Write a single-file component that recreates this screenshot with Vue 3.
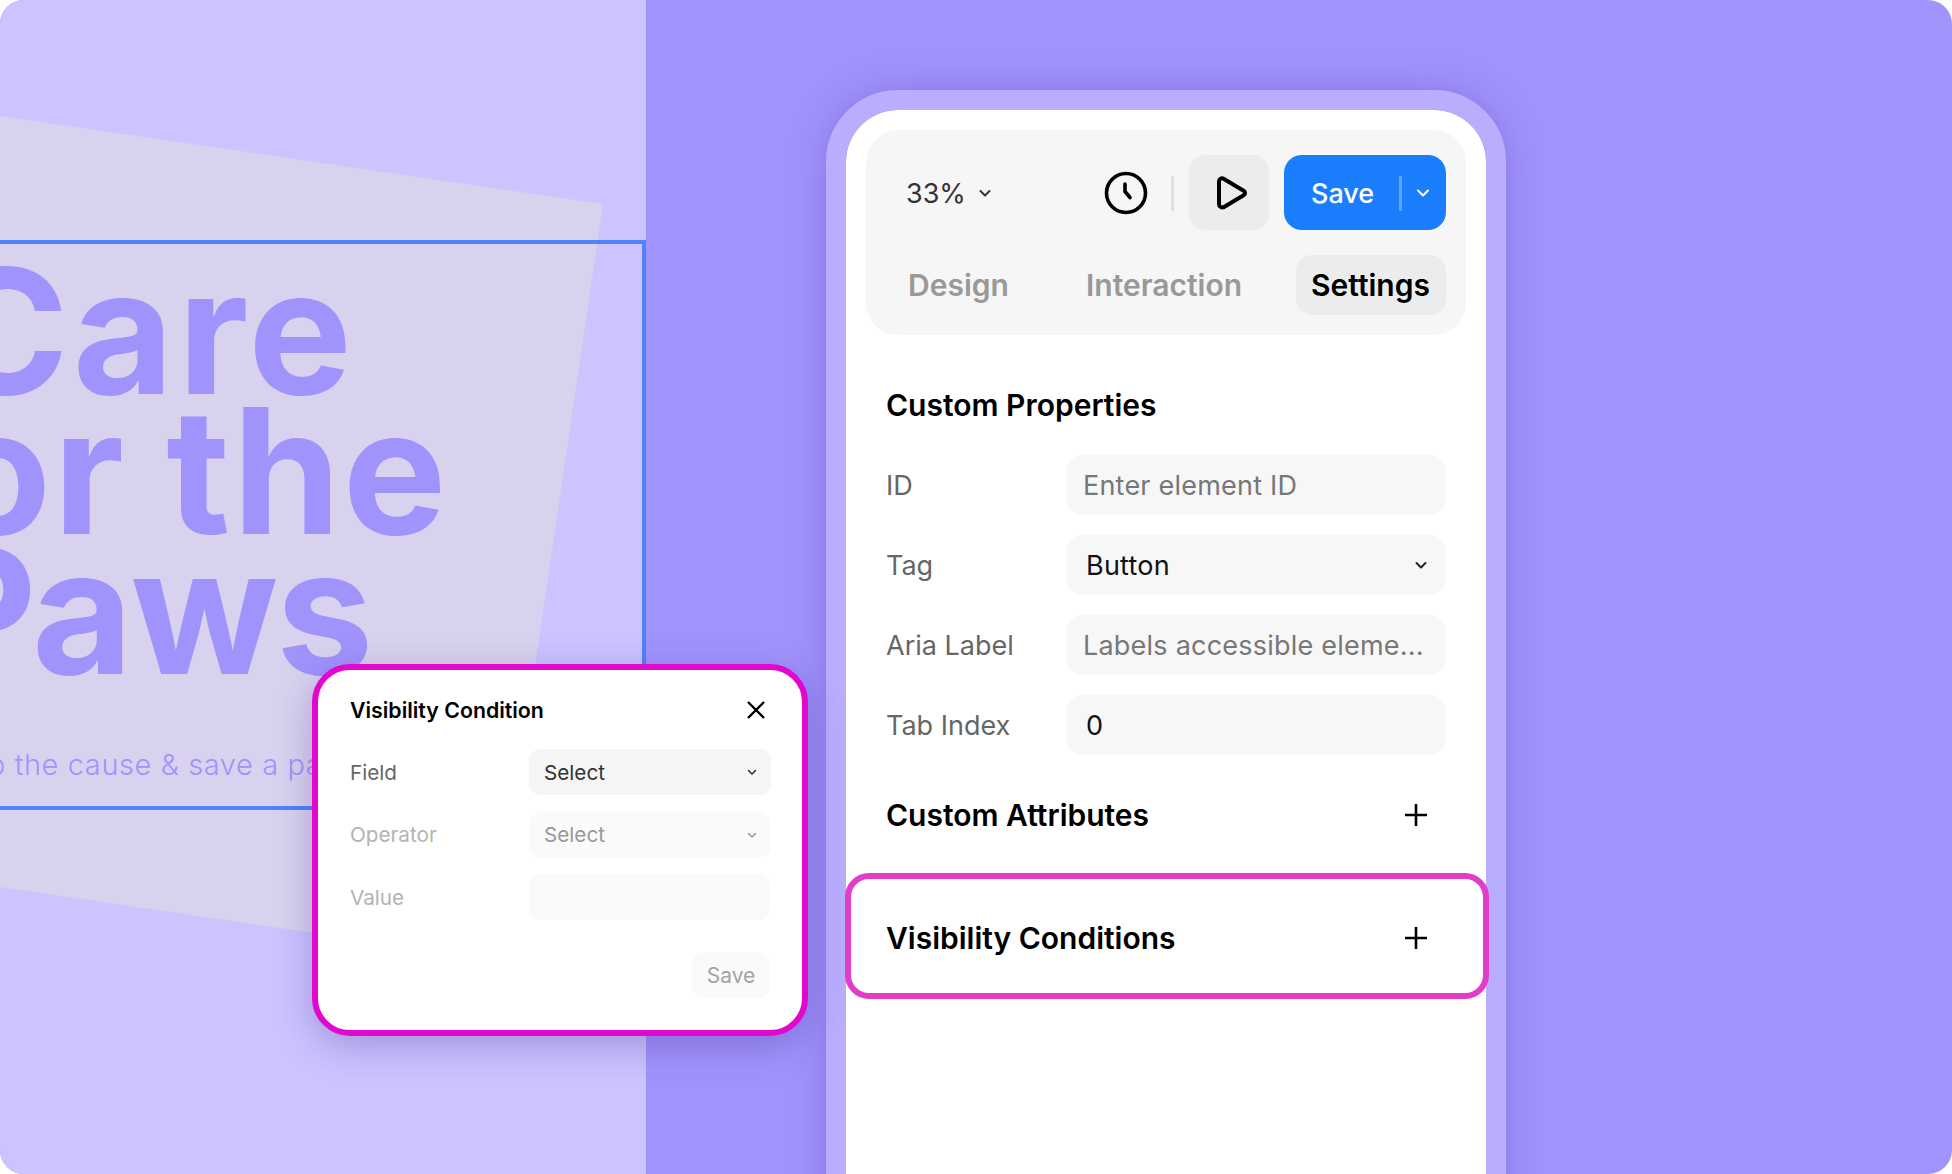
<script setup>
const rows = [
  { label: 'ID', value: 'Enter element ID', kind: 'placeholder' },
  { label: 'Tag', value: 'Button', kind: 'select' },
  { label: 'Aria Label', value: 'Labels accessible eleme...', kind: 'placeholder' },
  { label: 'Tab Index', value: '0', kind: 'value' }
]
</script>

<template>
  <main class="page">
    <section class="artboard">
      <div class="paper"></div>
      <div class="selection"></div>
      <h1 class="headline">
        <span class="line line-care">Care</span>
        <span class="line line-for">for the</span>
        <span class="line line-paws">Paws</span>
      </h1>
      <p class="subline">Help the cause &amp; save a paw</p>
    </section>

    <section class="stage">
      <div class="phone">
        <div class="toolbar">
          <div class="actions">
            <div class="zoom-level">
              <span>33%</span>
              <svg class="chev" width="14" height="14" viewBox="0 0 14 14"><path d="M2.5 5 7 9.5 11.5 5" /></svg>
            </div>
            <svg class="clock" width="46" height="46" viewBox="0 0 46 46">
              <circle cx="23" cy="23" r="19.5" />
              <path d="M22 14v7.5l5 6" />
            </svg>
            <span class="rule"></span>
            <button class="play">
              <svg width="36" height="38" viewBox="0 0 36 38">
                <path d="M5 7.5c0-2.6 2.6-4 4.6-2.7l20 12c2 1.2 2 3.2 0 4.4l-20 12C7.600 34 5 32.600 5 30z" />
              </svg>
            </button>
            <button class="save">
              <span class="save-label">Save</span>
              <span class="save-rule"></span>
              <svg class="chev white" width="14" height="14" viewBox="0 0 14 14"><path d="M2 4.500 7 9.500 12 4.500" /></svg>
            </button>
          </div>
          <nav class="tabs">
            <span class="tab tab-design">Design</span>
            <span class="tab tab-interaction">Interaction</span>
            <span class="tab tab-active">Settings</span>
          </nav>
        </div>

        <div class="content">
          <h2 class="heading heading-props">Custom Properties</h2>
          <div class="form">
            <div v-for="row in rows" :key="row.label" class="form-row">
              <label class="form-label">{{ row.label }}</label>
              <div class="field" :class="row.kind">
                <span>{{ row.value }}</span>
                <svg v-if="row.kind === 'select'" class="chev dark" width="14" height="14" viewBox="0 0 14 14"><path d="M2.500 5 7 9.500 11.500 5" /></svg>
              </div>
            </div>
          </div>
          <div class="section-row attributes">
            <h2 class="heading">Custom Attributes</h2>
            <svg class="plus" width="24" height="24" viewBox="0 0 24 24"><path d="M12 1v22M1 12h22" /></svg>
          </div>
          <div class="section-row highlight">
            <h2 class="heading">Visibility Conditions</h2>
            <svg class="plus" width="24" height="24" viewBox="0 0 24 24"><path d="M12 1v22M1 12h22" /></svg>
          </div>
        </div>
      </div>
    </section>

    <aside class="modal">
      <header class="modal-head">
        <span class="modal-title">Visibility Condition</span>
        <svg class="close" width="20" height="20" viewBox="0 0 20 20"><path d="M2 2l16 16M18 2 2 18" /></svg>
      </header>
      <div class="modal-row">
        <span class="modal-label">Field</span>
        <div class="modal-field">
          <span>Select</span>
          <svg class="chev small" width="10" height="10" viewBox="0 0 10 10"><path d="M1.500 3.500 5 7l3.500-3.500" /></svg>
        </div>
      </div>
      <div class="modal-row muted">
        <span class="modal-label">Operator</span>
        <div class="modal-field">
          <span>Select</span>
          <svg class="chev small" width="10" height="10" viewBox="0 0 10 10"><path d="M1.500 3.500 5 7l3.500-3.500" /></svg>
        </div>
      </div>
      <div class="modal-row muted">
        <span class="modal-label">Value</span>
        <div class="modal-field"></div>
      </div>
      <div class="modal-foot">
        <button class="modal-save">Save</button>
      </div>
    </aside>
  </main>
</template>

<style>
html, body { margin: 0; background: #fff; }
</style>

<style scoped>
* { box-sizing: border-box; }
.page {
  position: relative;
  display: flex;
  width: 1952px;
  height: 1174px;
  overflow: hidden;
  border-radius: 24px;
  background: #a193fc;
  font-family: Inter, "Noto Sans", sans-serif;
  color: #000;
}
.artboard {
  position: relative;
  flex: 0 0 646px;
  height: 100%;
  overflow: hidden;
  background: #ccc3ff;
}
.paper {
  position: absolute;
  inset: 0;
  background: #d8d2ee;
  clip-path: polygon(0 116px, 603px 204px, 492px 959px, 0 887px);
}
.selection {
  position: absolute;
  left: -10px;
  top: 240px;
  width: 656px;
  height: 570px;
  border: 4px solid #4f82fb;
}
.headline {
  position: absolute;
  left: -58px;
  top: 261px;
  margin: 0;
  font-size: 174px;
  line-height: 140px;
  font-weight: 700;
  color: #a193fc;
  white-space: nowrap;
}
.line {
  display: block;
  letter-spacing: 3.5px;
}
.line-care {
  margin-left: -2px;
  letter-spacing: 4px;
}
.line-for {
  margin-left: -65px;
  letter-spacing: 2px;
  word-spacing: -3px;
}
.line-paws {
  margin-left: -18px;
  letter-spacing: -2.5px;
}
.subline {
  position: absolute;
  left: -59px;
  top: 747px;
  margin: 0;
  font-size: 29px;
  font-weight: 300;
  letter-spacing: 0.6px;
  line-height: 36px;
  color: #a193fc;
  white-space: nowrap;
}
.stage {
  flex: 1;
  padding: 90px 0 0 180px;
}
.phone {
  width: 680px;
  height: 1200px;
  padding: 20px 20px 0;
  border: 20px solid #b9adfe;
  border-radius: 72px;
  background: #fff;
  background-clip: padding-box;
  box-shadow: 0 0 36px rgba(64, 40, 170, 0.26);
}
.toolbar {
  display: flex;
  flex-direction: column;
  gap: 25px;
  height: 205px;
  padding: 25px 20px 0 40px;
  border-radius: 32px;
  background: #f6f6f6;
}
.actions {
  display: flex;
  align-items: center;
  height: 75px;
}
.zoom-level {
  display: flex;
  align-items: center;
  gap: 12px;
  width: 198px;
  padding-top: 1px;
  font-size: 27px;
  color: #333;
}
.chev path {
  fill: none;
  stroke: #333;
  stroke-width: 2;
  stroke-linecap: round;
  stroke-linejoin: round;
}
.chev.white path { stroke: #fff; }
.clock {
  flex: none;
  margin-top: 1px;
  margin-right: 22px;
}
.clock circle, .clock path {
  fill: none;
  stroke: #000;
  stroke-width: 3.6;
  stroke-linecap: round;
  stroke-linejoin: round;
}
.rule {
  flex: none;
  width: 3px;
  height: 35px;
  margin-top: 1px;
  margin-right: 15px;
  background: #e0e0e0;
}
.play {
  display: flex;
  flex: none;
  align-items: center;
  justify-content: center;
  width: 80px;
  height: 75px;
  margin-right: 15px;
  padding: 1px 0 0;
  border: 0;
  border-radius: 16px;
  background: #ececec;
}
.play svg { margin-left: 5px; }
.play path {
  fill: none;
  stroke: #000;
  stroke-width: 4;
  stroke-linejoin: round;
}
.save {
  display: flex;
  flex: none;
  align-items: center;
  width: 162px;
  height: 75px;
  padding: 1px 0 0 27px;
  border: 0;
  border-radius: 18px;
  background: #1a7efc;
  color: #fff;
  font-family: inherit;
  font-size: 27px;
  font-weight: 500;
}
.save-rule {
  width: 3px;
  height: 35px;
  margin: 0 14px 0 25px;
  background: #62a5fd;
}
.tabs {
  display: flex;
  align-items: center;
  height: 60px;
  font-size: 30px;
  font-weight: 600;
}
.tab { color: #999; line-height: 60px; }
.tab-design { margin-left: 2px; width: 178px; }
.tab-interaction { width: 210px; }
.tab-active {
  width: 150px;
  padding-left: 15px;
  border-radius: 16px;
  background: #ececec;
  color: #000;
}
.content {
  padding: 0 20px;
}
.heading {
  margin: 0;
  font-size: 30px;
  font-weight: 600;
  line-height: 40px;
  color: #000;
}
.heading-props {
  margin-top: 50px;
}
.form {
  display: flex;
  flex-direction: column;
  gap: 20px;
  margin-top: 30px;
}
.form-row {
  display: flex;
  align-items: center;
  height: 60px;
}
.form-label {
  flex: 0 0 180px;
  font-size: 27px;
  color: #666;
}
.field {
  display: flex;
  flex: 1;
  align-items: center;
  justify-content: space-between;
  height: 60px;
  padding: 0 18px 0 17px;
  border-radius: 16px;
  background: #f7f7f7;
  font-size: 27px;
  letter-spacing: 0.22px;
}
.field.placeholder { color: #777; }
.field.select, .field.value { padding-left: 20px; color: #111; }
.chev.dark path { stroke: #222; }
.section-row {
  display: flex;
  align-items: center;
  justify-content: space-between;
}
.attributes {
  height: 40px;
  margin-top: 40px;
  padding-right: 18px;
}
.plus path {
  fill: none;
  stroke: #000;
  stroke-width: 2.6;
}
.highlight {
  width: 644px;
  height: 126px;
  margin: 38px 0 0 -41px;
  padding: 3px 55px 0 35px;
  border: 6px solid #e13dc9;
  border-radius: 24px;
  background: #fff;
}
.modal {
  position: absolute;
  left: 312px;
  top: 664px;
  display: flex;
  flex-direction: column;
  width: 496px;
  height: 372px;
  padding: 20px 31px 0 32px;
  border: 6px solid #e207cc;
  border-radius: 38px;
  background: #fff;
  box-shadow: 0 10px 36px rgba(50, 30, 130, 0.28);
}
.modal-head {
  display: flex;
  align-items: center;
  justify-content: space-between;
  height: 40px;
  padding-right: 5px;
}
.modal-title {
  font-size: 21.300px;
  font-weight: 600;
}
.close path {
  fill: none;
  stroke: #000;
  stroke-width: 2.4;
}
.modal-row {
  display: flex;
  align-items: center;
  height: 46px;
  margin-top: 16.5px;
}
.modal-head + .modal-row { margin-top: 19px; }
.modal-label {
  flex: 0 0 179px;
  font-size: 20.700px;
  color: #666;
}
.modal-field {
  display: flex;
  flex: 1;
  align-items: center;
  justify-content: space-between;
  height: 46px;
  padding: 0 14px 0 15px;
  border-radius: 12px;
  background: #f5f5f5;
  font-size: 20.700px;
  color: #333;
}
.muted .modal-label { color: #b3b3b3; }
.muted .modal-field { background: #fafafa; color: #999; }
.muted .chev path { stroke: #999; }
.chev.small path { stroke-width: 1.6; }
.modal-foot {
  display: flex;
  justify-content: flex-end;
  margin-top: 32px;
}
.modal-save {
  width: 78px;
  height: 46px;
  margin-right: 1px;
  padding: 0;
  border: 0;
  border-radius: 12px;
  background: #fafafa;
  color: #a3a3a3;
  font-family: inherit;
  font-size: 21px;
}
</style>
